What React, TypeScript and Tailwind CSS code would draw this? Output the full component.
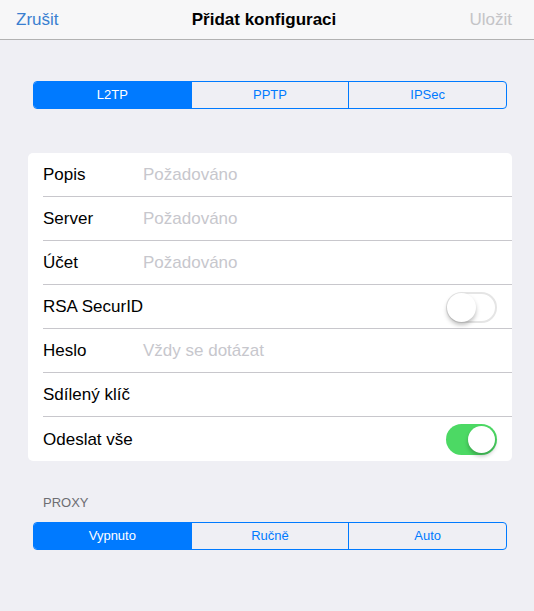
import { useState } from "react";

const font = { fontFamily: '"Liberation Sans", Arial, sans-serif' };

function Segmented({ items, active }: { items: string[]; active: number }) {
  return (
    <div className="flex h-[28px] rounded-[4px] border border-[#007aff] overflow-hidden">
      {items.map((it, i) => (
        <div
          key={it}
          className={
            "flex-1 flex items-center justify-center text-[13px] " +
            (i === active ? "bg-[#007aff] text-white" : "text-[#007aff]") +
            (i > 0 ? " border-l border-[#007aff]" : "")
          }
        >
          {it}
        </div>
      ))}
    </div>
  );
}

function Toggle({ on }: { on: boolean }) {
  return (
    <div
      className={
        "relative w-[51px] h-[31px] rounded-full " +
        (on ? "bg-[#4cd964]" : "bg-white border-2 border-[#e5e5e5]")
      }
    >
      <div
        className={
          "absolute rounded-full bg-white shadow-[0_3px_4px_rgba(0,0,0,0.25)] " +
          (on ? "right-[2px] top-[2px] w-[27px] h-[27px]" : "left-[-1px] top-[-1px] w-[29px] h-[29px]")
        }
      />
    </div>
  );
}

type Row = { label: string; placeholder?: string; toggle?: boolean };

const rows: Row[] = [
  { label: "Popis", placeholder: "Požadováno" },
  { label: "Server", placeholder: "Požadováno" },
  { label: "Účet", placeholder: "Požadováno" },
  { label: "RSA SecurID", toggle: false },
  { label: "Heslo", placeholder: "Vždy se dotázat" },
  { label: "Sdílený klíč" },
  { label: "Odeslat vše", toggle: true },
];

export default function App() {
  const [vpn] = useState(0);
  return (
    <div className="w-[534px] h-[611px] bg-[#efeff4] overflow-hidden" style={font}>
      <div className="h-[40px] bg-[#f7f7f8] border-b border-[#b2b2b2] flex items-center justify-between pl-[16px] pr-[22px] text-[17px]">
        <span className="text-[#3a7fd0] w-[80px]">Zrušit</span>
        <span className="font-bold text-black">Přidat konfiguraci</span>
        <span className="text-[#c4c4c7] w-[80px] text-right">Uložit</span>
      </div>

      <div className="pl-[33px] pt-[41px] pr-[27px]">
        <Segmented items={["L2TP", "PPTP", "IPSec"]} active={vpn} />
      </div>

      <div className="ml-[28px] mr-[22px] mt-[44px] bg-white rounded-[5px]">
        {rows.map((r, i) => (
          <div key={r.label} className="pl-[15px]">
            <div
              className={
                "h-[44px] flex items-center pr-[15px] pt-[1px] " +
                (i < rows.length - 1 ? "border-b border-[#c8c7cc]" : "")
              }
            >
              <span className="w-[100px] text-[17px] text-black whitespace-nowrap">{r.label}</span>
              {r.placeholder && (
                <span className="text-[17px] text-[#c7c7cd]">{r.placeholder}</span>
              )}
              {r.toggle !== undefined && (
                <div className="ml-auto">
                  <Toggle on={r.toggle} />
                </div>
              )}
            </div>
          </div>
        ))}
      </div>

      <div className="px-[43px] mt-[32px] text-[13px] text-[#6d6d72]">PROXY</div>

      <div className="pl-[33px] pr-[27px] mt-[9px]">
        <Segmented items={["Vypnuto", "Ručně", "Auto"]} active={0} />
      </div>
    </div>
  );
}
